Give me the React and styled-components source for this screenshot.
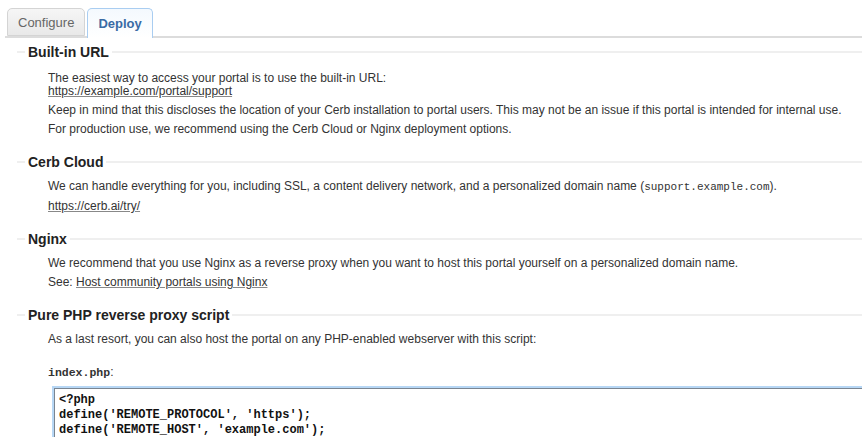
import React from "react";
import styled, { createGlobalStyle } from "styled-components";

const Global = createGlobalStyle`
  html, body {
    margin: 0;
    padding: 0;
    background: #fff;
    overflow: hidden;
  }
  body {
    font-family: "Liberation Sans", Arial, sans-serif;
    font-size: 12px;
    color: #333;
  }
`;

const Page = styled.div`
  width: 862px;
  height: 437px;
  overflow: hidden;
  padding-top: 8px;
  box-sizing: border-box;
`;

const TabBar = styled.div`
  display: flex;
  align-items: flex-end;
  gap: 2px;
  margin-left: 5px;
  padding-left: 2px;
  border-bottom: 2px solid #dcdcdc;
  height: 28px;
`;

const Tab = styled.div`
  box-sizing: border-box;
  height: ${({ $active }) => ($active ? "30px" : "28px")};
  margin-bottom: ${({ $active }) => ($active ? "-2px" : "0")};
  padding: 0 10px;
  display: flex;
  align-items: center;
  font-size: 13px;
  border: 1px solid ${({ $active }) => ($active ? "#a9cdf1" : "#d4d4d4")};
  border-bottom: ${({ $active }) => ($active ? "none" : "1px solid #d4d4d4")};
  border-radius: 5px 5px 0 0;
  color: ${({ $active }) => ($active ? "#3a6ba5" : "#666")};
  font-weight: ${({ $active }) => ($active ? "bold" : "normal")};
  background: ${({ $active }) =>
    $active
      ? "linear-gradient(to bottom, #f4f9fe, #ffffff)"
      : "linear-gradient(to bottom, #f6f6f6, #e9e9e9)"};
`;

const Section = styled.fieldset`
  margin: ${({ $first }) => ($first ? "5px" : "0")} 0 14px 17px;
  padding: 0 0 0 31px;
  border: 0;
  border-top: 2px solid #efefef;
  min-width: 0;
`;

const Legend = styled.legend`
  margin-left: -23px;
  padding: 0 3px;
  font-size: 14px;
  font-weight: bold;
  color: #222;
  line-height: 18px;
`;

const Content = styled.div`
  padding-top: 6px;
`;

const Line = styled.div`
  line-height: 19px;
  white-space: nowrap;
`;

const Tight = styled.div`
  line-height: 13px;
  padding: 5px 0 3px;
  white-space: nowrap;
`;

const Link = styled.a`
  color: #333;
  text-decoration: underline;
  text-decoration-color: #888;
`;

const Code = styled.code`
  font-family: "Liberation Mono", "Courier New", monospace;
  font-size: 11px;
`;

const FileName = styled.div`
  margin-top: 14px;
  line-height: 19px;
  white-space: nowrap;
`;

const FileCode = styled.span`
  font-family: "Liberation Mono", "Courier New", monospace;
  font-weight: bold;
  font-size: 11.5px;
`;

const Editor = styled.pre`
  margin: 6px 0 0 6px;
  padding: 4px 4px;
  border: 1px solid #7a8591;
  border-right: 0;
  box-shadow: 0 0 0 2px #b7d7f5;
  font-family: "Liberation Mono", "Courier New", monospace;
  font-weight: bold;
  font-size: 12px;
  line-height: 15px;
  color: #111;
  height: 60px;
  overflow: hidden;
`;

export default function App() {
  return (
    <Page>
      <Global />
      <TabBar>
        <Tab>Configure</Tab>
        <Tab $active>Deploy</Tab>
      </TabBar>

      <Section $first>
        <Legend>Built-in URL</Legend>
        <Content>
          <Tight>
            The easiest way to access your portal is to use the built-in URL:
            <br />
            <Link href="#">https://example.com/portal/support</Link>
          </Tight>
          <Line>
            Keep in mind that this discloses the location of your Cerb
            installation to portal users. This may not be an issue if this
            portal is intended for internal use.
          </Line>
          <Line>
            For production use, we recommend using the Cerb Cloud or Nginx
            deployment options.
          </Line>
        </Content>
      </Section>

      <Section>
        <Legend>Cerb Cloud</Legend>
        <Content>
          <Line>
            We can handle everything for you, including SSL, a content delivery
            network, and a personalized domain name (
            <Code>support.example.com</Code>).
          </Line>
          <Line>
            <Link href="#">https://cerb.ai/try/</Link>
          </Line>
        </Content>
      </Section>

      <Section>
        <Legend>Nginx</Legend>
        <Content>
          <Line>
            We recommend that you use Nginx as a reverse proxy when you want to
            host this portal yourself on a personalized domain name.
          </Line>
          <Line>
            See: <Link href="#">Host community portals using Nginx</Link>
          </Line>
        </Content>
      </Section>

      <Section>
        <Legend>Pure PHP reverse proxy script</Legend>
        <Content>
          <Line>
            As a last resort, you can also host the portal on any PHP-enabled
            webserver with this script:
          </Line>
          <FileName>
            <FileCode>index.php</FileCode>:
          </FileName>
          <Editor>{`<?php
define('REMOTE_PROTOCOL', 'https');
define('REMOTE_HOST', 'example.com');
define('REMOTE_PORT', 443);`}</Editor>
        </Content>
      </Section>
    </Page>
  );
}
